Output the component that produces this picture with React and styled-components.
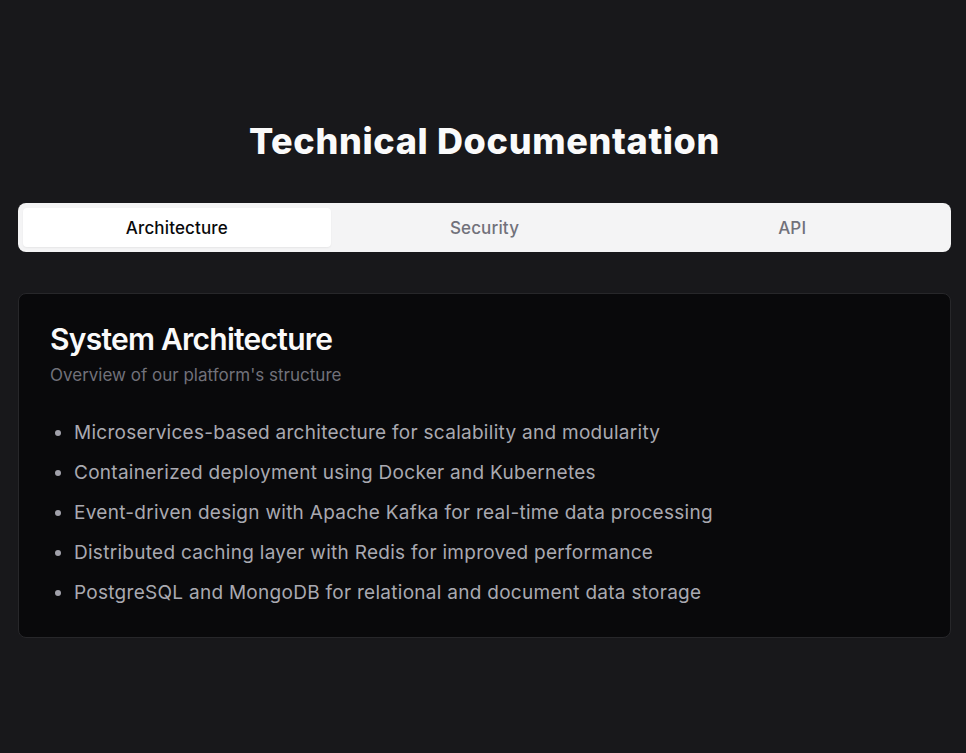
import React, { useState } from "react";
import styled, { createGlobalStyle } from "styled-components";

const Global = createGlobalStyle`
  html, body { margin: 0; padding: 0; background: #18181b; }
  body { font-family: Inter, "Noto Sans", sans-serif; -webkit-font-smoothing: antialiased; }
  * { box-sizing: border-box; }
`;

const Page = styled.div`
  min-height: 753px;
  display: flex;
  flex-direction: column;
  padding: 121px 15px 0 18px;
`;

const Title = styled.h1`
  margin: 0 0 42px;
  text-align: center;
  color: #fafafa;
  font-size: 36px;
  line-height: 40px;
  font-weight: 800;
  letter-spacing: 0.65px;
`;

const TabList = styled.div`
  display: grid;
  grid-template-columns: repeat(3, 1fr);
  background: #f4f4f5;
  border-radius: 8px;
  padding: 5px;
  height: 49px;
`;

const Tab = styled.button`
  border: none;
  border-radius: 4px;
  font-family: inherit;
  font-size: 17px;
  font-weight: 450;
  letter-spacing: 0.15px;
  background: ${(p) => (p.$active ? "#ffffff" : "transparent")};
  color: ${(p) => (p.$active ? "#09090b" : "#71717a")};
  box-shadow: ${(p) => (p.$active ? "0 1px 2px rgba(0,0,0,0.06)" : "none")};
  cursor: pointer;
`;

const Card = styled.section`
  margin-top: 41px;
  background: #09090b;
  border: 1px solid #27272a;
  border-radius: 8px;
  padding: 27px 31px 30px;
`;

const CardTitle = styled.h2`
  margin: 0;
  color: #fafafa;
  font-size: 30px;
  line-height: 36px;
  font-weight: 600;
  letter-spacing: -0.75px;
`;

const CardSub = styled.p`
  margin: 6px 0 0;
  color: #71717a;
  font-size: 17px;
  line-height: 24px;
`;

const List = styled.ul`
  margin: 32px 0 0;
  padding: 0 0 0 24px;
  color: #a9a9b1;
  font-size: 19px;
  line-height: 28px;
  letter-spacing: 0.28px;
  li { margin-bottom: 12px; }
  li:last-child { margin-bottom: 0; }
  li::marker { color: #a1a1aa; }
`;

const tabs = ["Architecture", "Security", "API"];
const items = [
  "Microservices-based architecture for scalability and modularity",
  "Containerized deployment using Docker and Kubernetes",
  "Event-driven design with Apache Kafka for real-time data processing",
  "Distributed caching layer with Redis for improved performance",
  "PostgreSQL and MongoDB for relational and document data storage",
];

export default function App() {
  const [active, setActive] = useState(0);
  return (
    <>
      <Global />
      <Page>
        <Title>Technical Documentation</Title>
        <TabList>
          {tabs.map((t, i) => (
            <Tab key={t} $active={i === active} onClick={() => setActive(i)}>
              {t}
            </Tab>
          ))}
        </TabList>
        <Card>
          <CardTitle>System Architecture</CardTitle>
          <CardSub>Overview of our platform's structure</CardSub>
          <List>
            {items.map((it) => (
              <li key={it}>{it}</li>
            ))}
          </List>
        </Card>
      </Page>
    </>
  );
}
